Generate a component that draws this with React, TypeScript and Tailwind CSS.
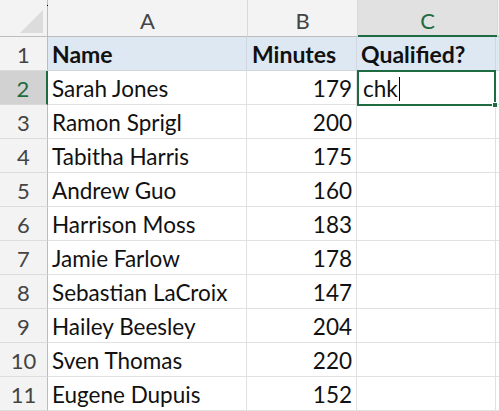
const rows: [string, string][] = [
  ['Sarah Jones', '179'],
  ['Ramon Sprigl', '200'],
  ['Tabitha Harris', '175'],
  ['Andrew Guo', '160'],
  ['Harrison Moss', '183'],
  ['Jamie Farlow', '178'],
  ['Sebastian LaCroix', '147'],
  ['Hailey Beesley', '204'],
  ['Sven Thomas', '220'],
  ['Eugene Dupuis', '152'],
];

const font = { fontFamily: 'Lato, "Open Sans", sans-serif' };

function RowHeader({ n, active }: { n: number; active?: boolean }) {
  return (
    <div
      className={
        'w-[48px] shrink-0 h-full pt-[2px] flex items-center justify-center border-r text-[22px] ' +
        (active
          ? 'bg-[#d2d2d2] text-[#1e6b41] border-r-2 border-r-[#1e6b41] border-b border-b-[#d9d9d9]'
          : 'bg-[#f3f3f3] text-[#444] border-r-[#bdbdbd] border-b border-b-[#dcdcdc]')
      }
    >
      {n}
    </div>
  );
}

export default function App() {
  return (
    <div className="w-[499px] h-[411px] overflow-hidden bg-white text-[#111] select-none" style={font}>
      {/* column headers */}
      <div className="flex h-[37px] bg-[#f3f3f3]">
        <div className="relative w-[48px] shrink-0 border-r border-[#bdbdbd] border-b border-b-[#bdbdbd]">
          <div className="absolute left-[20px] top-[10px] w-0 h-0 border-l-[23px] border-l-transparent border-b-[23px] border-b-[#dcdcdc]" />
          <div className="absolute right-[-1px] top-[5px] w-[1px] h-[1px] bg-black" />
        </div>
        <div className="w-[200px] shrink-0 pt-[5px] flex items-center justify-center text-[22px] text-[#444] border-r border-[#d9d9d9] border-b border-b-[#bdbdbd]">
          A
        </div>
        <div className="w-[110px] shrink-0 pt-[5px] flex items-center justify-center text-[22px] text-[#444] border-r border-[#d9d9d9] border-b border-b-[#bdbdbd]">
          B
        </div>
        <div className="w-[139px] shrink-0 pt-[5px] flex items-center justify-center text-[22px] text-[#1e6b41] bg-[#e1e1e1] border-b-2 border-b-[#1e6b41]">
          C
        </div>
        <div className="flex-1 border-l border-[#d9d9d9] border-b border-b-[#bdbdbd]" />
      </div>

      {/* header row */}
      <div className="flex h-[34px]">
        <RowHeader n={1} />
        <div className="flex flex-1 bg-[#dde8f3] font-bold text-[23px]">
          <div className="w-[199px] shrink-0 pl-[4px] pt-[2px] flex items-center border-r border-b border-[#d0d7e0]">Name</div>
          <div className="w-[110px] shrink-0 pl-[5px] pt-[2px] flex items-center border-r border-b border-[#d0d7e0]">Minutes</div>
          <div className="w-[139px] shrink-0 pl-[4px] pt-[2px] flex items-center border-r border-b border-[#d0d7e0]">Qualified?</div>
          <div className="flex-1 border-b border-[#d0d7e0]" />
        </div>
      </div>

      {rows.map(([name, mins], i) => (
        <div key={name} className="flex h-[34px] text-[22.5px]">
          <RowHeader n={i + 2} active={i === 0} />
          <div className="w-[199px] shrink-0 pl-[4px] pt-[2px] flex items-center border-r border-b border-[#e1e1e1]">{name}</div>
          <div className="w-[110px] shrink-0 pr-[4px] pt-[2px] flex items-center justify-end border-r border-b border-[#e1e1e1]">{mins}</div>
          {i === 0 ? (
            <div className="relative w-[139px] shrink-0 h-[36px] -mt-[1px] z-10 pl-[4px] pt-[2px] flex items-center border-2 border-[#1e6b41] bg-white">
              <span>chk</span>
              <span className="ml-[1px] w-[1px] h-[24px] bg-black" />
              <div className="absolute right-[-4px] bottom-[-4px] w-[6px] h-[6px] bg-[#1e6b41] border border-white" />
            </div>
          ) : (
            <div className="w-[139px] shrink-0 border-r border-b border-[#e1e1e1]" />
          )}
          <div className="flex-1 border-b border-[#e1e1e1]" />
        </div>
      ))}
    </div>
  );
}
